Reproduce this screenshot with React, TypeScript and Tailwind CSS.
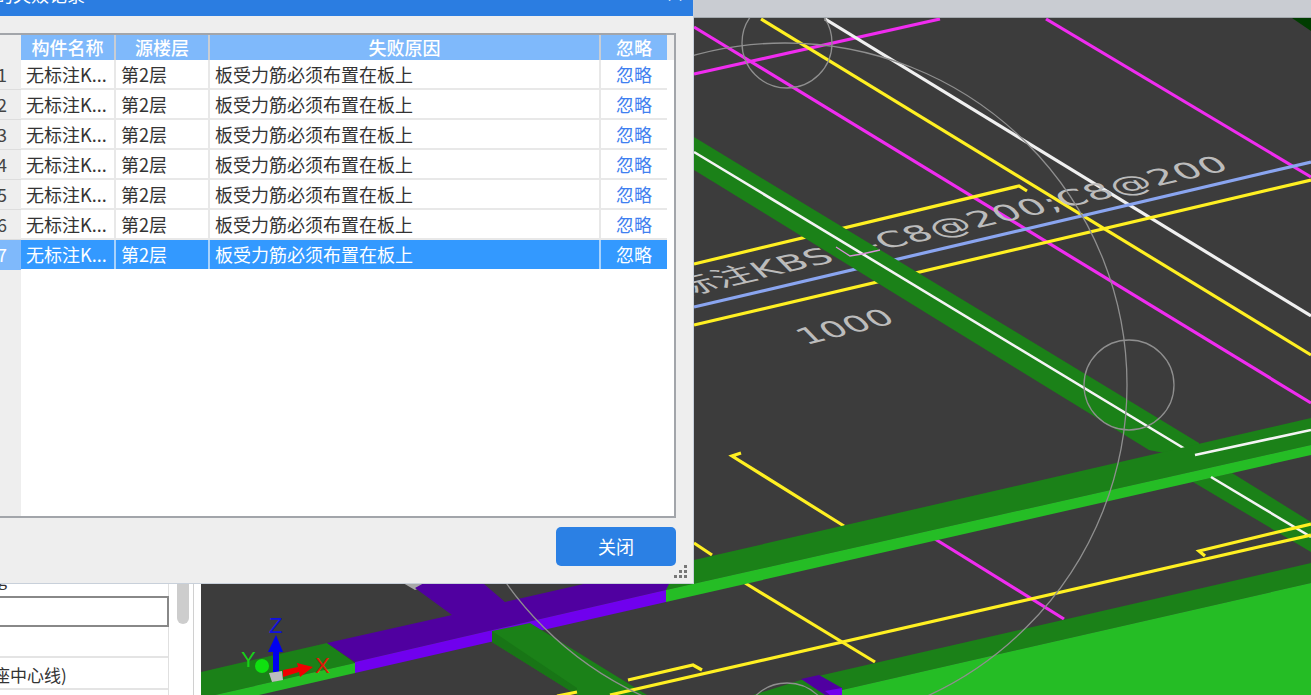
import React from "react";

const rows = [1, 2, 3, 4, 5, 6, 7];

function Scene() {
  return (
    <svg viewBox="201 18 1110 677" className="block w-full h-full" fill="none">
      <polygon points="1292,18 1311,18 1311,31" fill="#003c00" />
      {/* lines under the beams */}
      <g strokeWidth="3.2">
        <line x1="694" y1="27" x2="1311" y2="403" stroke="#f02cf0" />
        <line x1="1046" y1="19" x2="1311" y2="177" stroke="#f02cf0" />
        <line x1="694" y1="74" x2="940" y2="19" stroke="#f02cf0" />
        <line x1="761" y1="19" x2="1311" y2="355" stroke="#fff022" />
        <line x1="825" y1="19" x2="1311" y2="316" stroke="#f0f0f0" />
        <line x1="694" y1="325" x2="1311" y2="180" stroke="#fff022" />
        <polyline points="694,264 1019,186 1027,191" stroke="#fff022" />
        <line x1="694" y1="307" x2="1311" y2="162" stroke="#8aa5f0" />
        <polyline points="741,453 732,456 844,526" stroke="#fff022" />
        <line x1="694" y1="543" x2="712" y2="555" stroke="#fff022" />
        <line x1="745" y1="583" x2="875" y2="662" stroke="#fff022" />
        <line x1="935" y1="539" x2="1064" y2="619" stroke="#f02cf0" />
      </g>
      {/* scene text */}
      <g fontFamily="'DejaVu Sans','Noto Sans CJK SC',sans-serif" fill="#bcbcbc">
        <text transform="matrix(1.42,-0.33,0.72,0.74,643,306)" fontSize="27" letterSpacing="0.5">无标注KBSLJ-C8@200;C8@200</text>
        <text transform="matrix(1.33,-0.33,0.72,0.74,806,345)" fontSize="27">1000</text>
      </g>
      {/* diagonal beams */}
      <polygon points="694,137 1199,443 1199,460 1149,450 694,170" fill="#1b8118" />
      <polygon points="1193,482 1232,473 1311,522 1311,552" fill="#1b8118" />
      <polyline points="694,152 1195,455" stroke="#f4f4f4" strokeWidth="2.6" />
      <polyline points="836,247 850,256 862,254 880,250" stroke="#d890d8" strokeWidth="1.3" />
      {/* long beam */}
      <polygon points="694,560 1311,418 1311,445 666,590 655,560" fill="#1b8118" />
      <polyline points="1195,455 1311,430" stroke="#f4f4f4" strokeWidth="2.6" />
      <polygon points="666,590 1311,445 1311,455 666,602" fill="#25bd25" />
      <line x1="1211" y1="477" x2="1311" y2="537" stroke="#f4f4f4" strokeWidth="2.6" />
      {/* lower band */}
      <polygon points="753,695 801,680 1311,563 1311,583 842,690 842,695" fill="#1b8118" />
      <polygon points="842,690 1311,583 1311,695 842,695" fill="#25bd25" />
      <polygon points="801,679 819,675 842,688 842,695 825,695" fill="#5000a0" />
      <polygon points="825,691 842,688 842,695 830,695" fill="#7000ee" />
      {/* left beam, purple part */}
      <polygon points="403,583 433,583 415,590" fill="#a8a8a8" />
      <polygon points="201,672 327,643 355,663 215,695 201,695" fill="#1b8118" />
      <polygon points="355,663 355,673 259,695 215,695" fill="#25bd25" />
      <polygon points="327,643 452,615 415,588 433,578 477,578 505,602 680,562 666,590 355,662" fill="#5000a0" />
      <polygon points="355,662 666,590 666,602 355,673" fill="#7000ee" />
      {/* second diagonal beam */}
      <polygon points="492,631 530,623 647,695 577,695 492,642" fill="#1b8118" />
      <polygon points="492,631 577,688 577,695 492,642" fill="#187516" />
      {/* yellow long lines */}
      <g strokeWidth="3.2" stroke="#fff022">
        <line x1="610" y1="695" x2="1311" y2="535" />
        <line x1="557" y1="696" x2="577" y2="692" />
        <polyline points="628,680 693,665 702,670" />
        <polyline points="1205,556 1199,551 1311,524" />
      </g>
      {/* thin circles */}
      <g stroke="#8f8f8f" strokeWidth="1.3">
        <circle cx="787" cy="43" r="45" />
        <circle cx="1129" cy="385" r="45" />
        <circle cx="787" cy="728" r="45" />
        <circle cx="785" cy="385" r="342" />
      </g>
      {/* axis gizmo */}
      <path d="M276 635 L283 652 L279 652 L279 672 L273 672 L273 652 L268 652 Z" fill="#0000f0" />
      <circle cx="262" cy="666" r="7" fill="#10e010" />
      <path d="M283 670 L298 667 L297 663 L313 667 L300 677 L299 672 L283 677 Z" fill="#f00000" />
      <polygon points="269,673 282,671 283,680 272,682" fill="#bdbdbd" />
      <g fontFamily="'Liberation Sans',sans-serif" fontSize="22">
        <text x="269" y="633" fill="#1010e0">Z</text>
        <text x="241" y="667" fill="#18d018">Y</text>
        <text x="315" y="673" fill="#e01808">X</text>
      </g>
    </svg>
  );
}

export default function App() {
  return (
    <div className="relative flex w-[1311px] h-[695px] overflow-hidden bg-white font-['Noto_Sans_CJK_SC','Noto_Sans',sans-serif]">
      {/* left panel */}
      <div className="flex w-[201px] h-full shrink-0 bg-white">
        <div className="flex flex-col justify-end w-[169px] border-r border-[#e0e0e0]">
          <div className="h-[30px] flex items-center pb-[4px] overflow-hidden text-[16px] text-[#333] -ml-[2px]">g</div>
          <div className="h-[31px] border-2 border-[#888888] -ml-[4px] -mr-[1px]" />
          <div className="h-[31px] border-b-2 border-[#e4e4e4]" />
          <div className="h-[32px] flex items-center pt-[3px] overflow-hidden border-b-2 border-[#e4e4e4] text-[17px] text-[#333]">
            <span className="-ml-[7px] whitespace-nowrap">座中心线)</span>
          </div>
          <div className="h-[5px]" />
        </div>
        <div className="flex flex-col justify-end w-[25px] border-r border-[#d0d0d0] pb-[71px]">
          <div className="h-[60px] w-[12px] ml-[8px] rounded-full bg-[#cdcdcd]" />
        </div>
      </div>

      {/* viewport */}
      <div className="flex flex-col flex-1 min-w-0">
        <div className="h-[18px] shrink-0 bg-[#c9ccd2] border-b border-[#a3a9ae]" />
        <div className="flex-1 min-h-0 bg-[#3c3c3c]">
          <Scene />
        </div>
      </div>

      {/* dialog */}
      <div className="absolute -left-[20px] -top-[24px] flex flex-col w-[714px] h-[608px] bg-[#eeeeee] border-r border-b border-[#c8d0da]">
        <div className="flex items-center justify-between h-[40px] shrink-0 pb-[4px] pl-[15px] pr-[8px] bg-[#2b7de1] text-white text-[18px]">
          <span>的失败记录</span>
          <span className="text-[20px] leading-none">×</span>
        </div>
        <div className="flex flex-col h-[485px] mt-[17px] mr-[17px] bg-white border-t-2 border-r-2 border-b-2 border-[#a2a5aa]">
          {/* header */}
          <div className="flex h-[25px] shrink-0 text-[18px] leading-[25px] font-medium text-white">
            <div className="w-[41px] shrink-0 bg-[#eeeeee]" />
            <div className="flex flex-1 bg-[#7fb9fb]">
              <div className="w-[95px] shrink-0 text-center border-r-2 border-[#c8cdd4]">构件名称</div>
              <div className="w-[94px] shrink-0 text-center border-r-2 border-[#c8cdd4]">源楼层</div>
              <div className="w-[391px] shrink-0 text-center border-r-2 border-[#c8cdd4]">失败原因</div>
              <div className="flex-1 text-center">忽略</div>
            </div>
            <div className="w-[7px] shrink-0 bg-[#eeeeee]" />
          </div>
          {/* body */}
          <div className="flex flex-1 min-h-0">
            <div className="flex flex-col w-[41px] shrink-0 bg-[#eeeeee] text-[18px] text-[#444]">
              {rows.map((r) => (
                <div
                  key={r}
                  className={
                    r === 7
                      ? "h-[30px] pr-[14px] text-right leading-[29px] bg-[#7fb9fb] text-white"
                      : "h-[30px] pr-[14px] text-right leading-[29px] border-b border-[#dddddd]"
                  }
                >
                  {r}
                </div>
              ))}
            </div>
            <div className="flex flex-col flex-1 min-w-0 pr-[7px]">
              {rows.map((r) => {
                const sel = r === 7;
                return (
                  <div
                    key={r}
                    className={
                      sel
                        ? "flex h-[29px] shrink-0 text-[18px] leading-[29px] bg-[#3399ff] text-white"
                        : "flex h-[30px] shrink-0 text-[18px] leading-[29px] border-b-2 border-[#e8e8e8] text-[#333]"
                    }
                  >
                    <div className={"w-[95px] shrink-0 pl-[5px] whitespace-nowrap overflow-hidden border-r-2 " + (sel ? "border-[#a8d2fc]" : "border-[#e8e8e8]")}>无标注K...</div>
                    <div className={"w-[94px] shrink-0 pl-[5px] border-r-2 " + (sel ? "border-[#a8d2fc]" : "border-[#e8e8e8]")}>第2层</div>
                    <div className={"w-[391px] shrink-0 pl-[5px] border-r-2 " + (sel ? "border-[#a8d2fc]" : "border-[#e8e8e8]")}>板受力筋必须布置在板上</div>
                    <div className={"flex-1 text-center " + (sel ? "text-white" : "text-[#3f7ff0]")}>忽略</div>
                  </div>
                );
              })}
            </div>
          </div>
        </div>
        <div className="flex justify-end mt-[9px] mr-[17px]">
          <button className="w-[120px] h-[39px] rounded-[5px] bg-[#2b80e4] text-white text-[18px]">关闭</button>
        </div>
        <svg className="absolute right-[5px] bottom-[4px]" width="14" height="14" viewBox="0 0 14 14" fill="#777">
          <rect x="10" y="0" width="3" height="3" />
          <rect x="10" y="5" width="3" height="3" />
          <rect x="5" y="5" width="3" height="3" />
          <rect x="10" y="10" width="3" height="3" />
          <rect x="5" y="10" width="3" height="3" />
          <rect x="0" y="10" width="3" height="3" />
        </svg>
      </div>
    </div>
  );
}
